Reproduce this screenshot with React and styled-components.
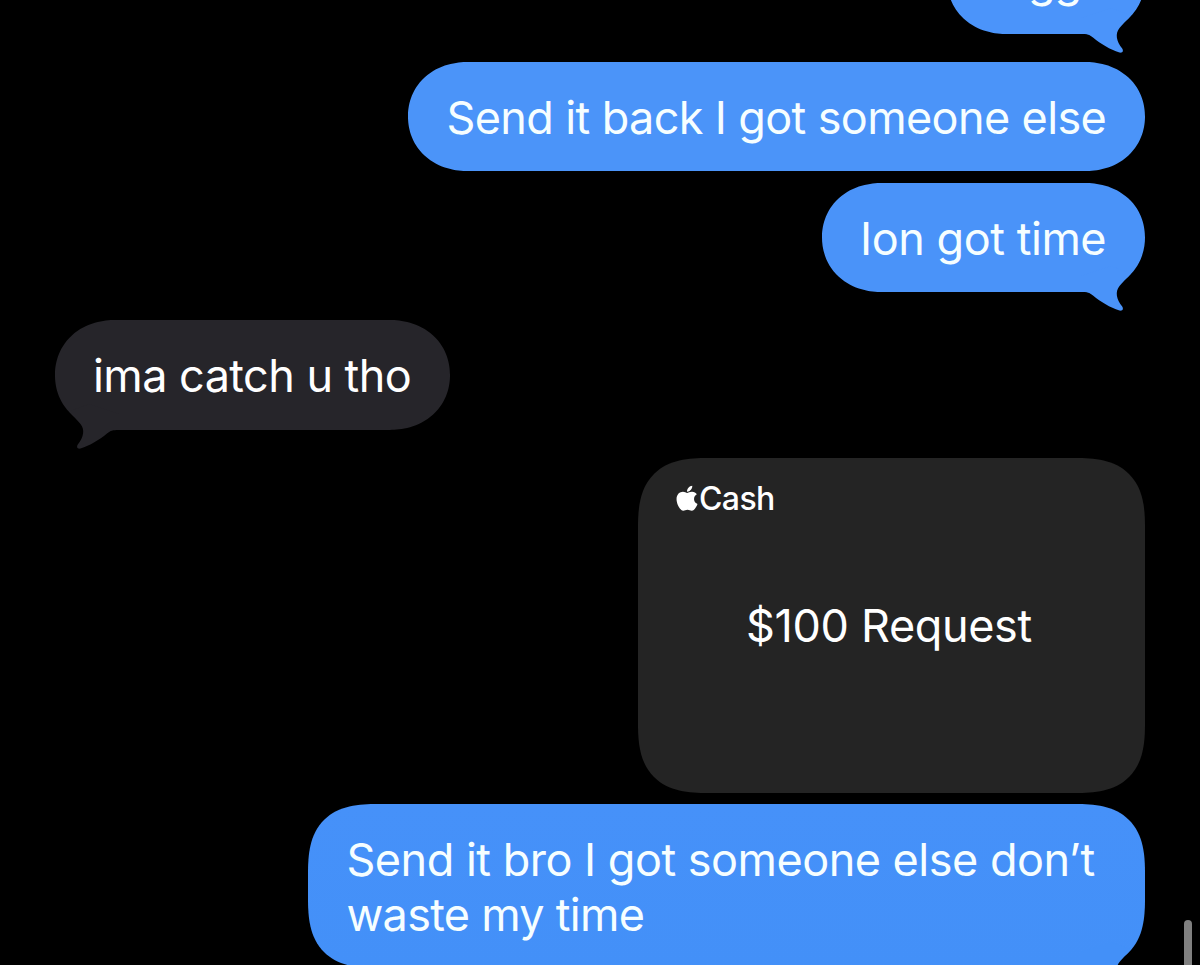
import React from "react";
import styled, { createGlobalStyle } from "styled-components";
import { FaApple } from "react-icons/fa";

const GlobalStyle = createGlobalStyle`
  * {
    box-sizing: border-box;
  }
  body {
    margin: 0;
    background: #000;
    font-family: Inter, "Liberation Sans", sans-serif;
  }
`;

const Screen = styled.div`
  position: relative;
  width: 1200px;
  height: 965px;
  overflow: hidden;
  background: #000;
`;

const Thread = styled.div`
  display: flex;
  flex-direction: column;
  margin-top: -75.5px;
  padding: 0 55px 0 54.5px;
`;

const Row = styled.div`
  display: flex;
  justify-content: ${({ $sent }) => ($sent ? "flex-end" : "flex-start")};
  margin-bottom: ${({ $gap }) => $gap}px;
`;

const Bubble = styled.div`
  position: relative;
  width: ${({ $width }) => $width}px;
  padding: 28.2px 0 26.3px ${({ $inset }) => $inset || 38.5}px;
  border-radius: ${({ $tall }) => ($tall ? "70px" : "60px / 54.75px")};
  corner-shape: superellipse(${({ $tall }) => ($tall ? 1.42 : 1.07)});
  background: ${({ $color }) => $color};
  color: ${({ $sent }) => ($sent ? "#f6feff" : "#fff")};
`;

const Line = styled.div`
  font-size: 45px;
  line-height: 55px;
  white-space: pre;
  letter-spacing: ${({ $spacing }) => $spacing || 0}px;
`;

const TailSvg = styled.svg`
  position: absolute;
  bottom: -20px;
  ${({ $sent }) => ($sent ? "right: 0;" : "left: 0; transform: scaleX(-1);")}
  width: 64px;
  height: 60px;
  overflow: visible;
`;

const CashCard = styled.div`
  display: flex;
  flex-direction: column;
  width: 507px;
  height: 335.5px;
  padding: 25px 38px;
  border-radius: 70px;
  corner-shape: superellipse(1.42);
  background: #242424;
  color: #fff;
`;

const CashBrand = styled.div`
  display: flex;
  align-items: center;
  height: 32px;
  gap: 1px;
  font-size: 32px;
  font-weight: 500;
  letter-spacing: -0.6px;

  svg {
    width: 22px;
    height: 28.5px;
  }
`;

const Amount = styled.div`
  margin-top: 83.5px;
  padding-right: 5px;
  font-size: 45px;
  line-height: 55px;
  text-align: center;
  white-space: pre;
  letter-spacing: -0.35px;
`;

const ScrollThumb = styled.div`
  position: absolute;
  top: 920px;
  right: 8.5px;
  width: 8px;
  height: 120px;
  border-radius: 4px;
  background: #808080;
`;

const Tail = ({ sent, color }) => (
  <TailSvg $sent={sent} viewBox="0 0 64 60">
    <path
      fill={color}
      d="M0 40 C7 40 8 40.5 12 43.5 C20 50 29 55.5 38.5 58.5 C41.5 59.2 42.8 57.3 41.2 54.6 C35.2 47 34 39.5 38.5 34 C41.5 30.3 45.5 27 50 21.6 L30 14 L0 24 Z"
    />
  </TailSvg>
);

const messages = [
  { lines: ["gg"], spacing: [-1.2], sent: true, tail: true, width: 198, inset: 81, color: "#4b94fa", gap: 28 },
  { lines: ["Send it back I got someone else"], spacing: [-0.63], sent: true, width: 737, color: "#4b94f9", gap: 11.2 },
  { lines: ["Ion got time"], spacing: [-0.45], sent: true, tail: true, width: 323.5, color: "#4a93f9", gap: 28 },
  { lines: ["ima catch u tho"], spacing: [-0.55], tail: true, width: 395.5, color: "#26252a", gap: 28 },
  { card: "$100 Request", sent: true, gap: 10.5 },
  {
    lines: ["Send it bro I got someone else don’t", "waste my time"],
    spacing: [-0.5, -0.72],
    sent: true,
    tail: true,
    tall: true,
    width: 837,
    color: "linear-gradient(#4691f9, #4390f8)",
    tailColor: "#4390f8",
    gap: 0,
  },
];

const Message = ({ message }) => {
  const { lines, spacing, card, sent, tail, tall, width, inset, color, tailColor, gap } = message;
  if (card) {
    return (
      <Row $sent={sent} $gap={gap}>
        <CashCard>
          <CashBrand>
            <FaApple />
            <span>Cash</span>
          </CashBrand>
          <Amount>{card}</Amount>
        </CashCard>
      </Row>
    );
  }
  return (
    <Row $sent={sent} $gap={gap}>
      <Bubble $sent={sent} $width={width} $inset={inset} $tall={tall} $color={color}>
        {tail && <Tail sent={sent} color={tailColor || color} />}
        {lines.map((line, i) => (
          <Line key={line} $spacing={spacing[i]}>
            {line}
          </Line>
        ))}
      </Bubble>
    </Row>
  );
};

export default function App() {
  return (
    <>
      <GlobalStyle />
      <Screen>
        <Thread>
          {messages.map((message, i) => (
            <Message key={i} message={message} />
          ))}
        </Thread>
        <ScrollThumb />
      </Screen>
    </>
  );
}
